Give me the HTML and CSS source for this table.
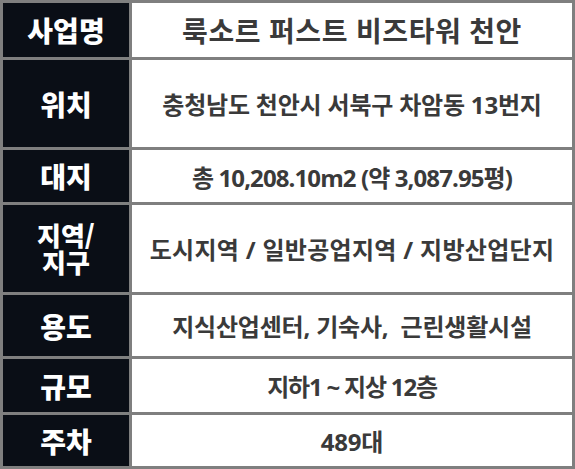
FILE: index.html
```html
<!DOCTYPE html>
<html lang="ko">
<head>
<meta charset="utf-8">
<title>사업개요</title>
<link rel="stylesheet" href="styles.css">
</head>
<body>
<div class="spec">
  <div class="label">사업명</div>
  <div class="value big">룩소르 퍼스트 비즈타워 천안</div>
  <div class="label">위치</div>
  <div class="value">충청남도 천안시 서북구 차암동 13번지</div>
  <div class="label">대지</div>
  <div class="value tight">총 10,208.10m2 (약 3,087.95평)</div>
  <div class="label two"><span class="line">지역/</span><span class="line">지구</span></div>
  <div class="value wide">도시지역 / 일반공업지역 / 지방산업단지</div>
  <div class="label">용도</div>
  <div class="value">지식산업센터, 기숙사,&nbsp; 근린생활시설</div>
  <div class="label">규모</div>
  <div class="value narrow">지하1 ~ 지상 12층</div>
  <div class="label">주차</div>
  <div class="value">489대</div>
</div>
</body>
</html>
```
FILE: styles.css
```css
html, body {
  margin: 0;
  padding: 0;
  background: #ffffff;
}
.spec {
  display: grid;
  grid-template-columns: 126px 440px;
  grid-template-rows: 54px 87px 52px 87px 61px 53px 51px;
  gap: 3px;
  padding: 3px;
  width: 575px;
  height: 469px;
  box-sizing: border-box;
  background: #7f7f7f;
}
.label {
  background: #0a0e16;
  color: #ffffff;
  font-family: "Noto Sans CJK KR", "Noto Sans", sans-serif;
  font-weight: 900;
  font-size: 28px;
  line-height: 1;
  display: flex;
  align-items: center;
  justify-content: center;
  text-align: center;
}
.label.two {
  flex-direction: column;
  gap: 1px;
  font-size: 26px;
}
.label.two .line {
  display: block;
  height: 26px;
  line-height: 26px;
}
.value {
  background: #ffffff;
  color: #3a3a3a;
  font-family: "Open Sans", "Noto Sans CJK KR", sans-serif;
  font-weight: 700;
  font-size: 24px;
  letter-spacing: -0.2px;
  display: flex;
  align-items: center;
  justify-content: center;
  text-align: center;
  white-space: pre;
}
.value.big {
  font-size: 28px;
  letter-spacing: 0.6px;
}
.value.tight {
  letter-spacing: -0.9px;
}
.value.wide {
  letter-spacing: 0.3px;
}
.value.narrow {
  letter-spacing: -1.2px;
}
```
